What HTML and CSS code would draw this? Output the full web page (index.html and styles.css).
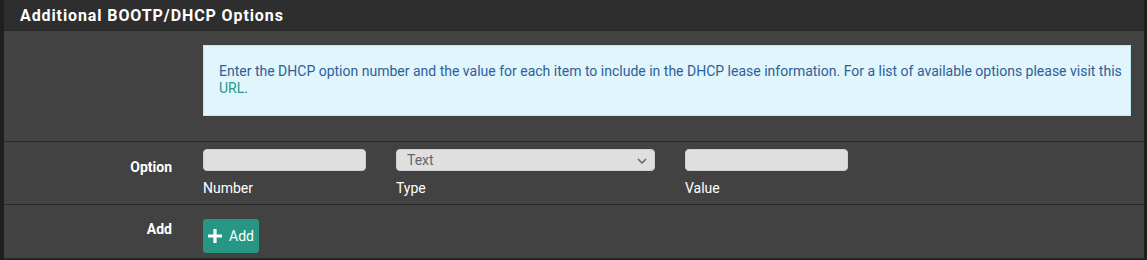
FILE: index.html
```html
<!DOCTYPE html>
<html>
<head>
    <title>Additional BOOTP/DHCP Options</title>
    <link rel="stylesheet" href="styles.css">
</head>
<body>
    <div class="panel">
        <div class="panel-heading">
            <h2 class="panel-title">Additional BOOTP/DHCP Options</h2>
        </div>
        <div class="panel-body">
            <div class="form-row info-row">
                <div class="form-label"></div>
                <div class="form-field">
                    <div class="alert-info">
                        Enter the DHCP option number and the value for each item to include in the DHCP lease information. For a list of available options please visit this <a href="#">URL</a>.
                    </div>
                </div>
            </div>
            <div class="form-row option-row">
                <div class="form-label">Option</div>
                <div class="form-field option-fields">
                    <div class="field narrow">
                        <input type="text" class="form-control">
                        <span class="help">Number</span>
                    </div>
                    <div class="field wide">
                        <div class="select-wrap">
                            <select class="form-control">
                                <option>Text</option>
                                <option>String</option>
                                <option>Boolean</option>
                            </select>
                            <svg class="caret" width="10" height="6" viewBox="0 0 10 6"><path d="M1 1l4 4 4-4" fill="none" stroke="#666" stroke-width="1.5"/></svg>
                        </div>
                        <span class="help">Type</span>
                    </div>
                    <div class="field narrow">
                        <input type="text" class="form-control">
                        <span class="help">Value</span>
                    </div>
                </div>
            </div>
            <div class="form-row add-row">
                <div class="form-label">Add</div>
                <div class="form-field">
                    <button type="button" class="btn-add">
                        <svg width="16" height="16" viewBox="0 0 16 16"><path d="M8 1v14M1 8h14" stroke="#fff" stroke-width="3.2"/></svg>
                        Add
                    </button>
                </div>
            </div>
        </div>
    </div>
</body>
</html>
```

FILE: styles.css
```css
body {
    margin: 0;
    padding: 0 3px 0 4px;
    background-color: #1f1f1f;
    font-family: Roboto, "Liberation Sans", sans-serif;
    font-size: 14px;
}
.panel {
    background-color: #424242;
    border-bottom: 1px solid #2a2a2a;
}
.panel-heading {
    background-color: #2e2e2e;
    border-bottom: 1px solid #262626;
    height: 30px;
    display: flex;
    align-items: center;
    padding-left: 16px;
}
.panel-title {
    margin: 0;
    color: #fff;
    font-size: 16px;
    font-weight: bold;
    letter-spacing: 0.9px;
}
.form-row {
    display: grid;
    grid-template-columns: 168px 1fr;
    column-gap: 31px;
    border-bottom: 1px solid #2a2a2a;
}
.form-row:last-child {
    border-bottom: none;
}
.form-label {
    text-align: right;
    color: #fff;
    font-weight: bold;
}
.info-row {
    padding: 14px 13px 25px 0;
}
.alert-info {
    background-color: #e1f5fc;
    border: 1px solid #bde6f0;
    color: #2c5f99;
    padding: 17px 4px 18px 15px;
    line-height: 17px;
}
.alert-info a {
    color: #269a8c;
    text-decoration: none;
}
.option-row {
    height: 63px;
    padding-top: 7px;
    box-sizing: border-box;
}
.option-row .form-label {
    padding-top: 10px;
}
.option-fields {
    display: flex;
    gap: 30px;
}
.field {
    display: flex;
    flex-direction: column;
}
.field.narrow {
    width: 163px;
}
.field.wide {
    width: 259px;
}
.form-control {
    box-sizing: border-box;
    width: 100%;
    height: 22px;
    background-color: #dfdfdf;
    border: 1px solid #d0d0d0;
    border-radius: 4px;
    font-family: Roboto, "Liberation Sans", sans-serif;
    font-size: 14px;
    color: #666;
    padding: 0 10px;
    margin: 0;
}
.select-wrap {
    position: relative;
}
select.form-control {
    appearance: none;
    -webkit-appearance: none;
}
.caret {
    position: absolute;
    right: 8px;
    top: 9px;
}
.help {
    color: #fff;
    margin-top: 9px;
    line-height: 17px;
}
.add-row {
    height: 53px;
    padding-top: 13px;
    box-sizing: border-box;
}
.add-row .form-label {
    padding-top: 3px;
}
.btn-add {
    display: inline-flex;
    align-items: center;
    gap: 6px;
    height: 34px;
    padding: 0 5px 0 4px;
    background-color: #279684;
    border: none;
    border-radius: 3px;
    color: #fff;
    font-family: Roboto, "Liberation Sans", sans-serif;
    font-size: 14px;
    margin-top: 1px;
}
```
